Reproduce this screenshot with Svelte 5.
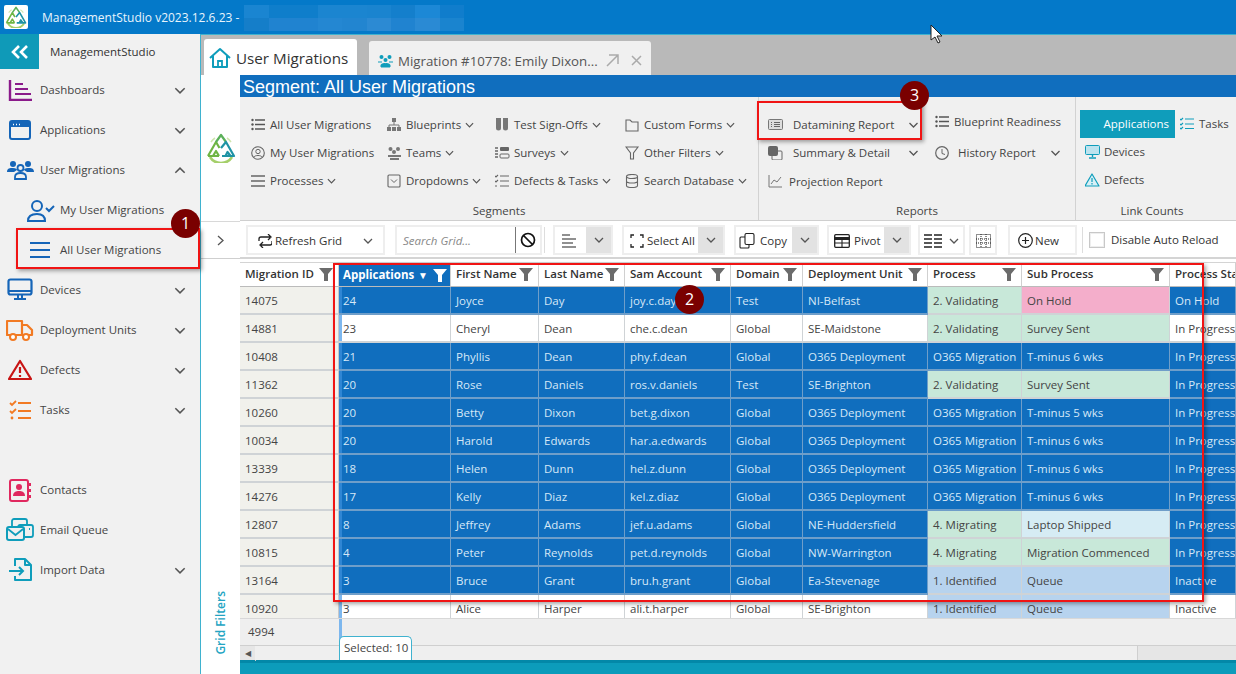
<script>
  const icons = {
    dash: '<path d="M2 1v20h22" fill="none" stroke="#8a1a8a" stroke-width="2.4"/><path d="M7 5h8M7 10h13M7 15h16" fill="none" stroke="#8a1a8a" stroke-width="2"/>',
    app: '<rect x="2" y="2" width="20" height="18" rx="2" fill="none" stroke="#1565b8" stroke-width="2"/><path d="M2 3h20v5H2z" fill="#1565b8"/><path d="M5 5.500h1M8 5.500h1M11 5.500h1" stroke="#fff" stroke-width="1.400"/>',
    users: '<circle cx="7" cy="5" r="3" fill="#1565b8"/><circle cx="22" cy="5" r="3" fill="#1565b8"/><path d="M1 13c0-4 3-4 6-4s4 1 4 2l-3 2zM28 13c0-4-3-4-6-4s-4 1-4 2l3 2z" fill="#1565b8"/><circle cx="14.500" cy="9" r="3" fill="none" stroke="#1565b8" stroke-width="1.800"/><path d="M9 20v-2c0-3 3-4 5.500-4s5.500 1 5.500 4v2z" fill="none" stroke="#1565b8" stroke-width="1.800"/>',
    mine: '<circle cx="11" cy="7" r="5" fill="none" stroke="#1565b8" stroke-width="2"/><path d="M2 22c0-5 4-7 9-7s8 2 8 7z" fill="none" stroke="#1565b8" stroke-width="2"/><path d="M20 9l3 3 5-5" fill="none" stroke="#1565b8" stroke-width="2"/>',
    lines: '<path d="M0 3h20M0 10h20M0 17h20" stroke="#1565b8" stroke-width="2" fill="none"/>',
    device: '<rect x="1.500" y="1.500" width="23" height="15" rx="2" fill="none" stroke="#1565b8" stroke-width="2.200"/><path d="M2 13h22" stroke="#1565b8" stroke-width="2"/><path d="M11 17v3M15 17v3M7 21h12" stroke="#1565b8" stroke-width="2"/>',
    truck: '<path d="M1 3h15v14H1zM16 7h5l5 5v5H16z" fill="none" stroke="#f27a23" stroke-width="2.200" stroke-linejoin="round"/><circle cx="7" cy="19" r="3" fill="#fff" stroke="#f27a23" stroke-width="2"/><circle cx="20" cy="19" r="3" fill="#fff" stroke="#f27a23" stroke-width="2"/>',
    warn: '<path d="M12 2L23 20H1z" fill="none" stroke="#c81414" stroke-width="2.200" stroke-linejoin="round"/><path d="M12 8v6M12 16v2" stroke="#c81414" stroke-width="2.200"/>',
    tasks: '<path d="M1 3l2 2 4-4M1 11l2 2 4-4" fill="none" stroke="#f27a23" stroke-width="1.800"/><path d="M9 3h13M9 11h13M9 18h13" stroke="#f27a23" stroke-width="2"/><circle cx="3" cy="18" r="1.400" fill="#f27a23"/>',
    contact: '<rect x="1" y="1" width="18" height="21" rx="2" fill="none" stroke="#e0285f" stroke-width="2"/><circle cx="10" cy="8" r="3" fill="#e0285f"/><path d="M4 17c0-4 3-5 6-5s6 1 6 5z" fill="#e0285f"/><path d="M21 4v3M21 10v3M21 16v3" stroke="#e0285f" stroke-width="2"/>',
    email: '<rect x="6" y="1" width="15" height="9" rx="2" fill="none" stroke="#0f9dbb" stroke-width="1.800"/><rect x="12" y="7" width="15" height="12" rx="2" fill="#f0f0f0" stroke="#0f9dbb" stroke-width="1.800"/><path d="M23 11h1" stroke="#0f9dbb" stroke-width="2"/><rect x="1" y="9" width="17" height="13" rx="2" fill="#f0f0f0" stroke="#0f9dbb" stroke-width="2"/><path d="M2 11l7.500 6 7.500-6" fill="none" stroke="#0f9dbb" stroke-width="1.800"/>',
    imp: '<path d="M7 8V1h10l6 6v15H7v-4M17 1v6h6" fill="none" stroke="#0f9dbb" stroke-width="2" stroke-linejoin="round"/><path d="M1 13h14M11 9l4 4-4 4" fill="none" stroke="#0f9dbb" stroke-width="2"/>',
    list: '<path d="M4 2h10M4 6.500h10M4 11h10" stroke="#555" stroke-width="1.300"/><circle cx="1.500" cy="2" r="1.200" fill="#555"/><circle cx="1.500" cy="6.500" r="1.200" fill="#555"/><circle cx="1.500" cy="11" r="1.200" fill="#555"/>',
    person: '<circle cx="7" cy="7" r="6.300" fill="none" stroke="#666" stroke-width="1.100"/><circle cx="7" cy="5.500" r="2.200" fill="none" stroke="#666"/><path d="M3 11c1-2 7-2 8 0" fill="none" stroke="#666"/>',
    burger: '<path d="M0 2h14M0 7h14M0 12h14" stroke="#666" stroke-width="1.300"/>',
    blue: '<rect x="5" y="0" width="4" height="4" fill="#777"/><path d="M7 4v3M2 10V7h10v3" fill="none" stroke="#777"/><rect x="0" y="9" width="4" height="4" fill="#777"/><rect x="5" y="9" width="4" height="4" fill="#777"/><rect x="10" y="9" width="4" height="4" fill="#777"/>',
    teams: '<circle cx="3.500" cy="3" r="2" fill="#777"/><circle cx="11" cy="3" r="2" fill="#777"/><circle cx="7" cy="6" r="2" fill="#777"/><path d="M1 10h13M3 13h9" stroke="#777" stroke-width="2"/>',
    drop: '<rect x="1" y="1" width="12" height="12" rx="1" fill="none" stroke="#666" stroke-width="1.100"/><path d="M4 5.500l3 3 3-3" fill="none" stroke="#666"/>',
    tests: '<path d="M1 0h5v10a2.500 2.500 0 0 1-5 0zM8 0h5v10a2.500 2.500 0 0 1-5 0z" fill="#777"/>',
    surveys: '<rect x="5" y="1" width="9" height="4" rx="1" fill="#666"/><rect x="5" y="8" width="9" height="4" rx="1" fill="none" stroke="#666"/><path d="M0 2h3M0 5h3M0 8h3M0 11h3" stroke="#666" stroke-width="1.400"/>',
    dt: '<path d="M0 2l1 1 2-2M0 7l1 1 2-2M0 12h2M5 2h9M5 7h9M5 12h9" fill="none" stroke="#666" stroke-width="1.100"/>',
    folder: '<path d="M1 2h4l2 2h6v9H1z" fill="none" stroke="#666" stroke-width="1.100"/>',
    funnel: '<path d="M1 1h12L8.500 7v6L5.500 13V7z" fill="none" stroke="#666" stroke-width="1.100"/>',
    db: '<ellipse cx="7" cy="2.500" rx="5.500" ry="2" fill="none" stroke="#666" stroke-width="1.100"/><path d="M1.500 2.500v9c0 2.700 11 2.700 11 0v-9M1.500 7c0 2.700 11 2.700 11 0" fill="none" stroke="#666" stroke-width="1.100"/>',
    report: '<rect x="0.500" y="1.500" width="14" height="10" rx="1" fill="#ddd" stroke="#777"/><path d="M3 4.500h1M3 6.500h1M3 8.500h1M6 4.500h6M6 6.500h6M6 8.500h6" stroke="#666"/>',
    summary: '<rect x="4" y="5" width="10" height="9" rx="1" fill="none" stroke="#666"/><rect x="0" y="0" width="10" height="10" rx="2" fill="#666"/>',
    clock: '<circle cx="7" cy="7" r="6.300" fill="none" stroke="#666" stroke-width="1.200"/><path d="M7 3v4.500l3 1" fill="none" stroke="#666"/>',
    chart: '<path d="M1 0v12h13" fill="none" stroke="#777"/><path d="M3 9l3-4 3 2 4-5" fill="none" stroke="#777"/>',
    lk_tasks: '<path d="M0 2l1 1 2-2M0 7l1 1 2-2M0 11l1 1 2-2M5 2h9M5 7h9M5 11.500h9" fill="none" stroke="#0f9dbb" stroke-width="1.200"/>',
    lk_dev: '<rect x="0.500" y="0.500" width="14" height="9" rx="1" fill="#bde3ee" stroke="#0f9dbb"/><path d="M7.500 10v2M4 13h7" stroke="#0f9dbb" stroke-width="1.400"/>',
    lk_def: '<path d="M7 1L14 13H0z" fill="#d8f0f6" stroke="#0f9dbb" stroke-width="1.200" stroke-linejoin="round"/><path d="M7 5v4M7 10v1.500" stroke="#0f9dbb" stroke-width="1.200"/>',
    refresh: '<path d="M1 7V5a2 2 0 0 1 2-2h9M10 0l3 3-3 3M14 7v2a2 2 0 0 1-2 2H3M5 8l-3 3 3 3" fill="none" stroke="#222" stroke-width="1.300"/>',
    align: '<path d="M0 1h8M0 5h14M0 9h11M0 13h14" stroke="#222" stroke-width="1.200"/>',
    frame: '<path d="M1 4V1h3M10 1h3v3M13 10v3h-3M4 13H1v-3" fill="none" stroke="#222" stroke-width="1.300"/>',
    copy: '<rect x="6" y="0.500" width="9" height="11" rx="1.500" fill="#fff" stroke="#222" stroke-width="1.100"/><path d="M6 4H2a1 1 0 0 0-1 1v9a1 1 0 0 0 1 1h7a1 1 0 0 0 1-1v-2" fill="none" stroke="#222" stroke-width="1.100"/>',
    pivot: '<rect x="0.700" y="0.700" width="14.600" height="12.600" rx="1" fill="none" stroke="#222" stroke-width="1.300"/><path d="M0 4.500h16" stroke="#222" stroke-width="3"/><path d="M8 5v8M1 9h14" stroke="#222" stroke-width="1.100"/>',
    cols: '<path d="M0 1h8M10 1h8M0 5h8M10 5h8M0 9h8M10 9h8M0 13h8M10 13h8" stroke="#222" stroke-width="1.700"/>',
    dots: '<rect x="0.500" y="0.500" width="14" height="13" fill="none" stroke="#222" stroke-dasharray="1 1"/><path d="M5 0v14M10 0v14M0 5h15M0 9h15" stroke="#222" stroke-dasharray="1 1"/>',
    plus: '<circle cx="7.500" cy="7.500" r="6.800" fill="none" stroke="#222" stroke-width="1.200"/><path d="M4 7.500h7M7.500 4v7" stroke="#222" stroke-width="1.200"/>',
    ban: '<circle cx="8" cy="8" r="6.500" fill="none" stroke="#111" stroke-width="1.700"/><path d="M3.500 3.500l9 9" stroke="#111" stroke-width="1.700"/>',
    home: '<path d="M1 11L11 2l10 9M4 9v11h14V9" fill="none" stroke="#0f9dbb" stroke-width="2" stroke-linejoin="round"/><path d="M9 20v-6h4v6" fill="none" stroke="#0f9dbb" stroke-width="1.800"/>',
    tabusers: '<circle cx="3.500" cy="3" r="2" fill="#0f9dbb"/><circle cx="11.500" cy="3" r="2" fill="#0f9dbb"/><circle cx="7.500" cy="6" r="2" fill="#0f9dbb"/><path d="M0 8h4M11 8h4M3 13v-2c0-2 9-2 9 0v2z" fill="#0f9dbb" stroke="#0f9dbb"/>'
  };

  const nav = [
    { label: 'Dashboards', icon: 'dash', w: 24, h: 22, c: 'down' },
    { label: 'Applications', icon: 'app', w: 24, h: 22, c: 'down' },
    { label: 'User Migrations', icon: 'users', w: 29, h: 22, c: 'up', wide: true },
    { label: 'My User Migrations', icon: 'mine', w: 29, h: 23, sub: true },
    { label: 'All User Migrations', icon: 'lines', w: 20, h: 20, sub: true, lined: true },
    { label: 'Devices', icon: 'device', w: 26, h: 24, c: 'down' },
    { label: 'Deployment Units', icon: 'truck', w: 28, h: 24, c: 'down' },
    { label: 'Defects', icon: 'warn', w: 24, h: 22, c: 'down' },
    { label: 'Tasks', icon: 'tasks', w: 23, h: 21, c: 'down' }
  ];
  const nav2 = [
    { label: 'Contacts', icon: 'contact', w: 23, h: 23 },
    { label: 'Email Queue', icon: 'email', w: 29, h: 24, wide: true },
    { label: 'Import Data', icon: 'imp', w: 24, h: 24, c: 'down' }
  ];

  const segments = [
    { l: 'All User Migrations', i: 'list' }, { l: 'Blueprints', i: 'blue', d: 1 }, { l: 'Test Sign-Offs', i: 'tests', d: 1 }, { l: 'Custom Forms', i: 'folder', d: 1 },
    { l: 'My User Migrations', i: 'person' }, { l: 'Teams', i: 'teams', d: 1 }, { l: 'Surveys', i: 'surveys', d: 1 }, { l: 'Other Filters', i: 'funnel', d: 1 },
    { l: 'Processes', i: 'burger', d: 1 }, { l: 'Dropdowns', i: 'drop', d: 1 }, { l: 'Defects & Tasks', i: 'dt', d: 1 }, { l: 'Search Database', i: 'db', d: 1 }
  ];

  const cols = ['Migration ID', 'Applications', 'First Name', 'Last Name', 'Sam Account', 'Domain', 'Deployment Unit', 'Process', 'Sub Process', 'Process Status'];

  const O = ['Global', 'O365 Deployment', 'O365 Migration'];
  const rows = [
    { v: ['14075', '24', 'Joyce', 'Day', 'joy.c.day', 'Test', 'NI-Belfast', '2. Validating', 'On Hold', 'On Hold'], p: 'green', s: 'pink', sel: true },
    { v: ['14881', '23', 'Cheryl', 'Dean', 'che.c.dean', 'Global', 'SE-Maidstone', '2. Validating', 'Survey Sent', 'In Progress'], p: 'green', s: 'green' },
    { v: ['10408', '21', 'Phyllis', 'Dean', 'phy.f.dean', ...O, 'T-minus 6 wks', 'In Progress'], sel: true },
    { v: ['11362', '20', 'Rose', 'Daniels', 'ros.v.daniels', 'Test', 'SE-Brighton', '2. Validating', 'Survey Sent', 'In Progress'], p: 'green', s: 'green', sel: true },
    { v: ['10260', '20', 'Betty', 'Dixon', 'bet.g.dixon', ...O, 'T-minus 5 wks', 'In Progress'], sel: true },
    { v: ['10034', '20', 'Harold', 'Edwards', 'har.a.edwards', ...O, 'T-minus 6 wks', 'In Progress'], sel: true },
    { v: ['13339', '18', 'Helen', 'Dunn', 'hel.z.dunn', ...O, 'T-minus 6 wks', 'In Progress'], sel: true },
    { v: ['14276', '17', 'Kelly', 'Diaz', 'kel.z.diaz', ...O, 'T-minus 6 wks', 'In Progress'], sel: true },
    { v: ['12807', '8', 'Jeffrey', 'Adams', 'jef.u.adams', 'Global', 'NE-Huddersfield', '4. Migrating', 'Laptop Shipped', 'In Progress'], p: 'green', s: 'sky', sel: true },
    { v: ['10815', '4', 'Peter', 'Reynolds', 'pet.d.reynolds', 'Global', 'NW-Warrington', '4. Migrating', 'Migration Commenced', 'In Progress'], p: 'green', s: 'green', sel: true },
    { v: ['13164', '3', 'Bruce', 'Grant', 'bru.h.grant', 'Global', 'Ea-Stevenage', '1. Identified', 'Queue', 'Inactive'], p: 'blue', s: 'blue', sel: true },
    { v: ['10920', '3', 'Alice', 'Harper', 'ali.t.harper', 'Global', 'SE-Brighton', '1. Identified', 'Queue', 'Inactive'], p: 'blue', s: 'blue' }
  ];

  const mosaic = ['#1a85d1', '#0f7ecb', '#0f7ecb', '#1b85d0', '#1b85d0', '#1a84cf', '#147fcc', '#1c88d6', '#107dcc',
                  '#157ec9', '#2083d0', '#2083d0', '#2487d2', '#2285d0', '#2c8ad3', '#2083d0', '#2a8ad4', '#1a84cf'];

  function cellClass(r, i) {
    if (i === 0) return 'cell rowhead';
    let c = 'cell';
    if (i === 1) c += ' first';
    if (i === 7 && r.p) return c + ' ' + r.p;
    if (i === 8 && r.s) return c + ' ' + r.s;
    if (r.sel) c += ' sel';
    return c;
  }
</script>

{#snippet ic(name, w, h)}
  <svg class="icon" width={w} height={h} viewBox={`0 0 ${w} ${h}`} aria-hidden="true">{@html icons[name]}</svg>
{/snippet}

{#snippet chev(cls = '')}
  <svg class="chev {cls}" width="10" height="6" viewBox="0 0 10 6" aria-hidden="true"><path d="M1 1l4 4 4-4" fill="none" stroke="#555" stroke-width="1.300"/></svg>
{/snippet}

{#snippet logo(s)}
  <svg width={s} height={s} viewBox="0 0 30 30" aria-hidden="true">
    <path d="M4 24a13 13 0 0 0 22 0" fill="none" stroke="#a5cf6a" stroke-width="2.600"/>
    <path d="M5 9a13 13 0 0 1 4-4M21 5a13 13 0 0 1 4 4" fill="none" stroke="#cfe5ae" stroke-width="1.500"/>
    <path d="M2 23L10 9l3.500 6M2 23h11M7 23l3-5 3 5" fill="none" stroke="#6fb544" stroke-width="2.200" stroke-linejoin="round"/>
    <path d="M10 9l5-7 5 7" fill="none" stroke="#5bb05a" stroke-width="2.200" stroke-linejoin="round"/>
    <path d="M15 15l5-6 8 14H16M19.500 23l2-4 3 4" fill="none" stroke="#1f93a5" stroke-width="2.200" stroke-linejoin="round"/>
  </svg>
{/snippet}

{#snippet funnel(white = false)}
  <svg class="funnel" width="14" height="14" viewBox="0 0 14 14" aria-hidden="true"><path d="M0 1h14L9 7v7H5V7z" fill={white ? '#fff' : '#6b6b6b'}/></svg>
{/snippet}

<div class="app">
  <header class="titlebar">
    <span class="appicon">{@render logo(22)}</span>
    <span class="apptitle">ManagementStudio v2023.12.6.23 -</span>
    <span class="redact">
      {#each mosaic as m}<i style:background={m}></i>{/each}
    </span>
  </header>

  <div class="body">
    <aside class="sidebar">
      <div class="sidehead">
        <button class="collapse" aria-label="Collapse">
          <svg width="18" height="14" viewBox="0 0 18 14"><path d="M8 1L2 7l6 6M16 1l-6 6 6 6" fill="none" stroke="#fff" stroke-width="2.600"/></svg>
        </button>
        <span class="sidename">ManagementStudio</span>
      </div>
      <nav class="navlist">
        {#each nav as n}
          <div class="nav" class:sub={n.sub} class:current={n.lined}>
            <span class="navicon">{@render ic(n.icon, n.w, n.h)}</span>
            <span class="navlabel">{n.label}</span>
            {#if n.c}{@render chev(n.c === 'up' ? 'flip big' : 'big')}{/if}
          </div>
        {/each}
      </nav>
      <nav class="navlist second">
        {#each nav2 as n}
          <div class="nav">
            <span class="navicon">{@render ic(n.icon, n.w, n.h)}</span>
            <span class="navlabel">{n.label}</span>
            {#if n.c}{@render chev('big')}{/if}
          </div>
        {/each}
      </nav>
    </aside>

    <main class="main">
      <div class="tabs">
        <div class="tab active">{@render ic('home', 22, 22)}<span>User Migrations</span></div>
        <div class="tab other">
          {@render ic('tabusers', 15, 14)}<span>Migration #10778: Emily Dixon...</span>
          <svg width="14" height="13" viewBox="0 0 14 13" class="popout"><path d="M1 12L12 1M3 1h9v9" fill="none" stroke="#aaa" stroke-width="1.500"/></svg>
          <svg width="11" height="11" viewBox="0 0 11 11" class="close"><path d="M1 1l9 9M10 1l-9 9" stroke="#aaa" stroke-width="1.500"/></svg>
        </div>
      </div>

      <div class="workspace">
        <div class="brand">{@render logo(30)}</div>
        <div class="upper">
          <div class="seghead">Segment: All User Migrations</div>
          <div class="ribbon">
            <section class="group g-seg">
              <div class="seggrid">
                {#each segments as s}
                  <div class="ritem">{@render ic(s.i, 15, 14)}<span>{s.l}</span>{#if s.d}{@render chev()}{/if}</div>
                {/each}
              </div>
              <div class="grouplabel">Segments</div>
            </section>
            <section class="group g-rep">
              <div class="repgrid">
                <div class="ritem spread">{@render ic('report', 15, 14)}<span class="t1">Datamining Report</span>{@render chev('end')}</div>
                <div class="ritem raised">{@render ic('list', 15, 14)}<span>Blueprint Readiness</span></div>
                <div class="ritem spread">{@render ic('summary', 15, 14)}<span class="t1">Summary &amp; Detail</span>{@render chev('end')}</div>
                <div class="ritem spread">{@render ic('clock', 15, 14)}<span class="t2">History Report</span>{@render chev('end')}</div>
                <div class="ritem proj">{@render ic('chart', 15, 14)}<span>Projection Report</span></div>
              </div>
              <div class="grouplabel">Reports</div>
            </section>
            <section class="group g-link">
              <div class="linkgrid">
                <div class="linkon">Applications</div>
                <div class="ritem">{@render ic('lk_tasks', 15, 14)}<span>Tasks</span></div>
                <div class="ritem li">{@render ic('lk_dev', 15, 14)}<span>Devices</span></div>
                <div></div>
                <div class="ritem li">{@render ic('lk_def', 15, 14)}<span>Defects</span></div>
              </div>
              <div class="grouplabel">Link Counts</div>
            </section>
          </div>
        </div>

        <div class="expander">
          <svg width="7" height="11" viewBox="0 0 7 11"><path d="M1 1l5 4.500-5 4.500" fill="none" stroke="#555" stroke-width="1.300"/></svg>
        </div>
        <div class="toolbar">
          <div class="btn refresh">{@render ic('refresh', 14, 14)}<span>Refresh Grid</span>{@render chev('push')}</div>
          <div class="searchbox"><span class="placeholder">Search Grid...</span><span class="ban">{@render ic('ban', 16, 16)}</span></div>
          <span class="tsep"></span>
          <div class="split s-align"><span class="main-btn">{@render ic('align', 14, 14)}</span><span class="dd">{@render chev()}</span></div>
          <div class="split s-select"><span class="main-btn">{@render ic('frame', 14, 14)}<span>Select All</span></span><span class="dd">{@render chev()}</span></div>
          <div class="split s-copy"><span class="main-btn">{@render ic('copy', 16, 16)}<span>Copy</span></span><span class="dd">{@render chev()}</span></div>
          <div class="split s-pivot"><span class="main-btn">{@render ic('pivot', 16, 14)}<span>Pivot</span></span><span class="dd">{@render chev()}</span></div>
          <div class="btn cols">{@render ic('cols', 18, 14)}{@render chev()}</div>
          <div class="btn dots">{@render ic('dots', 15, 14)}</div>
          <div class="btn new">{@render ic('plus', 15, 15)}<span>New</span></div>
          <span class="tsep s2"></span>
          <label class="reload"><span class="check"></span><span>Disable Auto Reload</span></label>
        </div>

        <div class="rail"><span>Grid Filters</span></div>
        <div class="gridwrap">
          <div class="gridrow head">
            {#each cols as c, i}
              <div class="hcell" class:active={i === 1}>
                <span class="htext">{c}</span>
                {#if i === 1}<span class="sort">▼</span>{/if}
                {#if i !== 9}{@render funnel(i === 1)}{/if}
              </div>
            {/each}
          </div>
          <div class="rows">
            {#each rows as r}
              <div class="gridrow">
                {#each r.v as v, i}
                  <div class={cellClass(r, i)}>{v}</div>
                {/each}
              </div>
            {/each}
          </div>
          <div class="footer">
            <div class="count">4994</div>
            <div class="band"></div>
          </div>
          <div class="hscroll">
            <span class="arrow">◀</span>
            <div class="thumb"></div>
          </div>
          <div class="seltab">Selected: 10</div>
          <div class="status"></div>
        </div>
      </div>
    </main>
  </div>

  <div class="callout c1"></div>
  <div class="callout c2"></div>
  <div class="callout c3"></div>
  <div class="badge b1">1</div>
  <div class="badge b2">2</div>
  <div class="badge b3">3</div>
  <svg class="cursor" width="14" height="20" viewBox="0 0 14 20" aria-hidden="true"><path d="M1 1v15l4-3 3 6 2-1-3-6h5z" fill="#fff" stroke="#222"/></svg>
</div>

<style>
  :global(body) { margin: 0; background: #fff; }
  .app {
    position: relative; width: 1236px; height: 674px; overflow: hidden;
    display: flex; flex-direction: column;
    font: 11.5px/16px "Open Sans", "Noto Sans", sans-serif; color: #444;
  }
  .icon, .chev, .funnel { flex: none; display: block; }
  .flip { transform: rotate(180deg); }
  .big { width: 12px; height: 7px; }

  .titlebar { height: 34px; flex: none; background: #0479c9; display: flex; align-items: center; color: #e8f4fc; }
  .appicon { width: 24px; height: 24px; margin-left: 4px; background: #fff; border-radius: 2px; display: flex; align-items: center; justify-content: center; }
  .apptitle { margin-left: 14px; font-size: 12px; white-space: nowrap; padding-top: 2px; }
  .redact { width: 220px; height: 26px; margin: 2px 0 0 5px; display: grid; grid-template-columns: repeat(9, 1fr); grid-template-rows: 1fr 1fr; }
  .redact i { display: block; }

  .body { flex: 1; display: flex; min-height: 0; }

  .sidebar { width: 200px; flex: none; background: #f1f1f1; border-right: 1px solid #3fb2cf; display: flex; flex-direction: column; }
  .sidehead { height: 35px; display: flex; align-items: center; flex: none; }
  .collapse { width: 39px; height: 35px; border: 0; padding: 0; background: #0f9ab8; display: flex; align-items: center; justify-content: center; }
  .sidename { margin-left: 11px; color: #333; }
  .navlist { display: flex; flex-direction: column; padding-top: 1px; }
  .navlist.second { margin-top: 39px; }
  .nav { height: 40px; display: flex; align-items: center; padding: 0 14px 0 0; position: relative; }
  .navicon { width: 40px; flex: none; display: flex; justify-content: center; }
  .navlabel { flex: 1; white-space: nowrap; }
  .nav.sub { padding-left: 20px; }

  .main { flex: 1; min-width: 0; display: flex; flex-direction: column; }
  .tabs { height: 41px; flex: none; background: #b9b9b9; border-top: 1px solid #3fb2cf; box-sizing: border-box; display: flex; align-items: flex-end; padding-left: 3px; gap: 12px; }
  .tab { display: flex; align-items: center; border-radius: 3px 3px 0 0; white-space: nowrap; }
  .tab.active { width: 153px; height: 36px; background: #fff; font-size: 15.2px; color: #333; gap: 5px; padding: 2px 0 0 5px; box-sizing: border-box; }
  .tab.other { width: 282px; height: 34px; background: #f0f0f0; font-size: 13.3px; color: #555; padding: 5px 0 0 9px; box-sizing: border-box; gap: 5px; }
  .popout { margin-left: 3px; flex: none; }
  .close { margin-left: 6px; flex: none; }

  .workspace { flex: 1; min-height: 0; display: grid; grid-template-columns: 39px 1fr; grid-template-rows: 146px 38px 1fr; }
  .brand { background: #fff; display: flex; align-items: center; justify-content: center; }
  .upper { display: flex; flex-direction: column; min-width: 0; border-bottom: 1px solid #cfcfcf; }
  .seghead { height: 22px; flex: none; background: #106ebe; color: #fff; font: 18px/24px "Liberation Sans", Arial, sans-serif; padding-left: 3px; }
  .ribbon { flex: 1; display: flex; background: #f0f0f0; min-height: 0; }
  .group { display: flex; flex-direction: column; border-right: 1px solid #d2d2d2; flex: none; box-sizing: border-box; position: relative; }
  .g-seg { width: 519px; padding: 14px 0 0 11px; }
  .g-rep { width: 317px; padding: 14px 0 0 9px; }
  .g-link { flex: 1; border-right: 0; padding: 13px 0 0 4px; min-width: 0; }
  .grouplabel { margin-top: auto; height: 18px; line-height: 18px; text-align: center; color: #444; }
  .g-seg .grouplabel { margin-left: -11px; }
  .g-rep .grouplabel { margin-left: -9px; }
  .g-link .grouplabel { margin-left: -4px; padding-right: 8px; }
  .seggrid { display: grid; grid-template-columns: 136px 108px 130px auto; grid-auto-rows: 28px; }
  .ritem { display: flex; align-items: center; gap: 4px; white-space: nowrap; height: 28px; }
  .ritem .chev { width: 9px; }
  .repgrid { display: grid; grid-template-columns: 151px 126px; column-gap: 16px; grid-auto-rows: 28px; }
  .raised { margin-top: -3px; }
  .proj { gap: 6px; padding-top: 1px; }
  .spread .t1 { margin-left: 6px; }
  .spread .t2 { margin-left: 4px; }
  .chev.end { margin-left: auto; width: 11px; }
  .linkgrid { display: grid; grid-template-columns: 95px auto; column-gap: 5px; grid-auto-rows: 28px; }
  .linkon { background: #0f9dbb; color: #fff; display: flex; align-items: center; justify-content: flex-end; padding-right: 6px; }
  .li { padding-left: 5px; }

  .expander { display: flex; align-items: center; justify-content: center; background: #fff; border-top: 1px solid #d8d8d8; border-bottom: 1px solid #cfcfcf; }
  .toolbar { display: flex; align-items: center; background: #fff; padding: 2px 0 0 6px; border-bottom: 2px solid #d4d4d4; white-space: nowrap; min-width: 0; color: #333; }
  .btn { height: 30px; box-sizing: border-box; border: 2px solid #eee; display: flex; align-items: center; gap: 3px; padding-top: 1px; }
  .refresh { width: 139px; padding: 1px 10px 0; }
  .push { margin-left: auto; }
  .searchbox { width: 147px; height: 30px; margin-left: 10px; box-sizing: border-box; border: 2px solid #eee; display: flex; align-items: center; }
  .placeholder { flex: 1; font-style: italic; color: #888; padding: 1px 0 0 6px; }
  .ban { width: 25px; height: 100%; border-left: 1px solid #777; display: flex; align-items: center; justify-content: center; box-sizing: border-box; }
  .tsep { width: 1px; height: 26px; background: #ddd; margin: 0 8px 0 2px; flex: none; }
  .split { height: 30px; display: flex; margin-right: 9px; border: 2px solid #eee; box-sizing: border-box; flex: none; }
  .main-btn { display: flex; align-items: center; gap: 3px; padding: 1px 0 0 6px; box-sizing: border-box; }
  .dd { background: #e2e2e2; display: flex; align-items: center; justify-content: center; width: 25px; }
  .s-align .main-btn { width: 31px; padding-left: 7px; }
  .s-select .main-btn { width: 74px; }
  .s-copy .main-btn { width: 56px; padding-left: 3px; gap: 5px; }
  .s-copy { margin-right: 8px; }
  .s-pivot .main-btn { width: 55px; padding-left: 5px; gap: 4px; }
  .s-pivot { margin-right: 7px; }
  .cols { width: 47px; gap: 7px; justify-content: center; flex: none; }
  .dots { width: 28px; margin-left: 4px; justify-content: center; flex: none; }
  .new { width: 69px; margin-left: 11px; padding-left: 8px; gap: 2px; flex: none; }
  .tsep.s2 { margin: 0 0 0 5px; }
  .reload { display: flex; align-items: center; gap: 6px; margin-left: 6px; }
  .check { width: 16px; height: 16px; border: 1px solid #c8c8c8; box-shadow: inset 0 0 0 1px #eee; box-sizing: border-box; display: block; }

  .rail { display: flex; align-items: flex-end; justify-content: center; background: #fff; padding-bottom: 19px; }
  .rail span { writing-mode: vertical-rl; transform: rotate(180deg); color: #23a4c2; font-weight: 600; font-size: 12px; }

  .gridwrap { position: relative; display: flex; flex-direction: column; min-width: 0; min-height: 0; overflow: hidden; padding-top: 3px; }
  .gridrow { display: grid; grid-template-columns: 99px 112px 88px 86px 106px 72px 125px 94px 148px 1fr; height: 28px; color: #444; }
  .gridrow.head { height: 25px; color: #333; border-top: 1px solid #d4d4d4; box-sizing: border-box; flex: none; }
  .hcell { display: flex; align-items: center; padding: 0 5px 1px; border-right: 1px solid #d0d0d0; border-bottom: 1px solid #bbb; min-width: 0; white-space: nowrap; font-weight: 600; overflow: hidden; }
  .htext { flex: 1; }
  .hcell .funnel { margin-left: 2px; }
  .hcell.active { background: #106ebe; color: #fff; border-top: 1px solid #106ebe; font-weight: 700; padding: 0 3px 1px 4px; }
  .sort { font-size: 10px; margin-right: 3px; }
  .rows { height: 331px; overflow: hidden; flex: none; }
  .cell { padding: 2px 3px 0 5px; display: flex; align-items: center; white-space: nowrap; overflow: hidden; border-right: 1px solid #cfd3d6; border-bottom: 2px solid #cfd3d6; box-sizing: border-box; background: #fff; }
  .rowhead { background: #f1f1ec; padding-left: 5px; border-right-color: #c8c8c8; }
  .first { box-shadow: inset 3px 0 0 #7db7ee; padding-left: 4px; }
  .first.sel { box-shadow: inset 3px 0 0 #2f86d4; }
  .sel { background: #106ebe; color: #d6e8f7; border-color: #6f9ec9; }
  .green { background: #c8e8d9; }
  .pink { background: #f4aecb; }
  .sky { background: #d6ecf4; }
  .blue { background: #b7d3ee; }

  .footer { height: 27px; flex: none; display: flex; border-top: 1px solid #d8d8d8; box-sizing: border-box; }
  .count { width: 99px; padding-left: 8px; line-height: 26px; background: #efefef; box-sizing: border-box; color: #444; }
  .band { flex: 1; background: #eee; box-shadow: inset 3px 0 0 #7db7ee; }
  .hscroll { height: 15px; flex: none; background: #e6e6e6; border-top: 1px solid #cfcfcf; box-sizing: border-box; display: flex; align-items: center; position: relative; }
  .arrow { font-size: 8px; width: 15px; text-align: center; color: #555; border-right: 1px solid #cfcfcf; }
  .thumb { position: absolute; left: 15px; right: 98px; top: 0; bottom: 0; background: #efefef; border-right: 1px solid #cfcfcf; }
  .seltab { position: absolute; left: 99px; top: 377px; height: 24px; width: 73px; box-sizing: border-box; border: 1px solid #3fb2cf; border-bottom: 0; border-radius: 5px 5px 0 0; background: #fff; padding-left: 4px; line-height: 22px; color: #444; z-index: 1; white-space: nowrap; }
  .status { height: 15px; flex: none; background: linear-gradient(#0388a8 0 3px, #0c9cbb 3px); }

  .callout { position: absolute; box-sizing: border-box; border: 2px solid #f01414; box-shadow: 2px 2px 4px rgba(0,0,0,.35); pointer-events: none; }
  .c1 { left: 16px; top: 228px; width: 184px; height: 41px; }
  .c2 { left: 333px; top: 263px; width: 871px; height: 339px; }
  .c3 { left: 757px; top: 101px; width: 165px; height: 39px; }
  .badge { position: absolute; width: 29px; height: 29px; border-radius: 50%; background: #7a0000; color: #fff; font-size: 16px; line-height: 29px; text-align: center; }
  .b1 { left: 171px; top: 209px; }
  .b2 { left: 675px; top: 285px; }
  .b3 { left: 900px; top: 81px; }
  .cursor { position: absolute; left: 930px; top: 24px; }
</style>
